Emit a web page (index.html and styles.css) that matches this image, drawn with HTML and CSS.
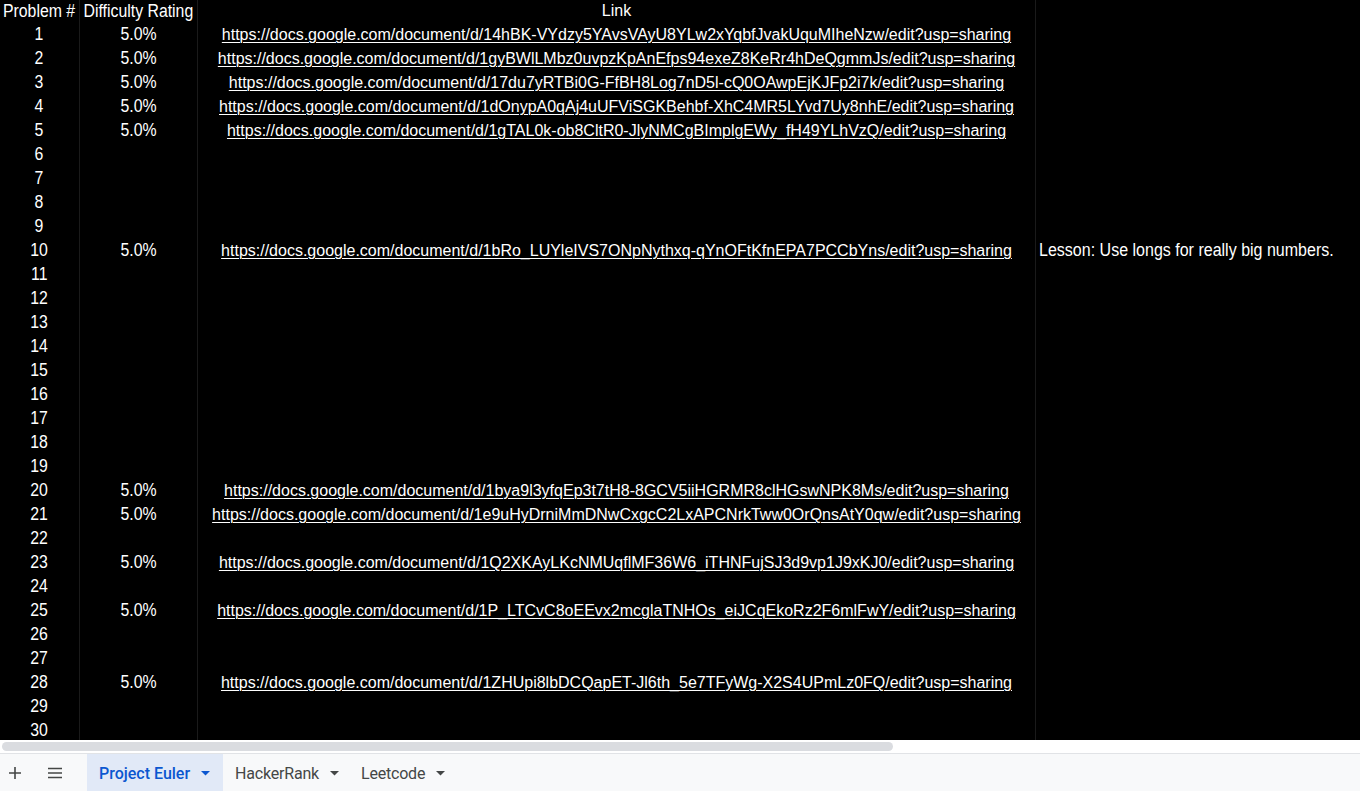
FILE: index.html
```html
<!DOCTYPE html>
<html>
<head>
<meta charset="utf-8">
<link rel="stylesheet" href="styles.css">
</head>
<body>
<div class="sheet">
  <div class="grid">
    <div class="c a hd"><span>Problem #</span></div><div class="c b hd"><span>Difficulty Rating</span></div><div class="c l hd">Link</div><div class="c d"></div>
    <div class="c a"><span>1</span></div><div class="c b"><span>5.0%</span></div><div class="c l"><u>https://docs.google.com/document/d/14hBK-VYdzy5YAvsVAyU8YLw2xYqbfJvakUquMIheNzw/edit?usp=sharing</u></div><div class="c d"></div>
    <div class="c a"><span>2</span></div><div class="c b"><span>5.0%</span></div><div class="c l"><u>https://docs.google.com/document/d/1gyBWlLMbz0uvpzKpAnEfps94exeZ8KeRr4hDeQgmmJs/edit?usp=sharing</u></div><div class="c d"></div>
    <div class="c a"><span>3</span></div><div class="c b"><span>5.0%</span></div><div class="c l"><u>https://docs.google.com/document/d/17du7yRTBi0G-FfBH8Log7nD5l-cQ0OAwpEjKJFp2i7k/edit?usp=sharing</u></div><div class="c d"></div>
    <div class="c a"><span>4</span></div><div class="c b"><span>5.0%</span></div><div class="c l"><u>https://docs.google.com/document/d/1dOnypA0qAj4uUFViSGKBehbf-XhC4MR5LYvd7Uy8nhE/edit?usp=sharing</u></div><div class="c d"></div>
    <div class="c a"><span>5</span></div><div class="c b"><span>5.0%</span></div><div class="c l"><u>https://docs.google.com/document/d/1gTAL0k-ob8CltR0-JlyNMCgBImplgEWy_fH49YLhVzQ/edit?usp=sharing</u></div><div class="c d"></div>
    <div class="c a"><span>6</span></div><div class="c b"></div><div class="c l"></div><div class="c d"></div>
    <div class="c a"><span>7</span></div><div class="c b"></div><div class="c l"></div><div class="c d"></div>
    <div class="c a"><span>8</span></div><div class="c b"></div><div class="c l"></div><div class="c d"></div>
    <div class="c a"><span>9</span></div><div class="c b"></div><div class="c l"></div><div class="c d"></div>
    <div class="c a"><span>10</span></div><div class="c b"><span>5.0%</span></div><div class="c l"><u>https://docs.google.com/document/d/1bRo_LUYleIVS7ONpNythxq-qYnOFtKfnEPA7PCCbYns/edit?usp=sharing</u></div><div class="c d"><span class="note">Lesson: Use longs for really big numbers.</span></div>
    <div class="c a"><span>11</span></div><div class="c b"></div><div class="c l"></div><div class="c d"></div>
    <div class="c a"><span>12</span></div><div class="c b"></div><div class="c l"></div><div class="c d"></div>
    <div class="c a"><span>13</span></div><div class="c b"></div><div class="c l"></div><div class="c d"></div>
    <div class="c a"><span>14</span></div><div class="c b"></div><div class="c l"></div><div class="c d"></div>
    <div class="c a"><span>15</span></div><div class="c b"></div><div class="c l"></div><div class="c d"></div>
    <div class="c a"><span>16</span></div><div class="c b"></div><div class="c l"></div><div class="c d"></div>
    <div class="c a"><span>17</span></div><div class="c b"></div><div class="c l"></div><div class="c d"></div>
    <div class="c a"><span>18</span></div><div class="c b"></div><div class="c l"></div><div class="c d"></div>
    <div class="c a"><span>19</span></div><div class="c b"></div><div class="c l"></div><div class="c d"></div>
    <div class="c a"><span>20</span></div><div class="c b"><span>5.0%</span></div><div class="c l"><u>https://docs.google.com/document/d/1bya9l3yfqEp3t7tH8-8GCV5iiHGRMR8clHGswNPK8Ms/edit?usp=sharing</u></div><div class="c d"></div>
    <div class="c a"><span>21</span></div><div class="c b"><span>5.0%</span></div><div class="c l"><u>https://docs.google.com/document/d/1e9uHyDrniMmDNwCxgcC2LxAPCNrkTww0OrQnsAtY0qw/edit?usp=sharing</u></div><div class="c d"></div>
    <div class="c a"><span>22</span></div><div class="c b"></div><div class="c l"></div><div class="c d"></div>
    <div class="c a"><span>23</span></div><div class="c b"><span>5.0%</span></div><div class="c l"><u>https://docs.google.com/document/d/1Q2XKAyLKcNMUqflMF36W6_iTHNFujSJ3d9vp1J9xKJ0/edit?usp=sharing</u></div><div class="c d"></div>
    <div class="c a"><span>24</span></div><div class="c b"></div><div class="c l"></div><div class="c d"></div>
    <div class="c a"><span>25</span></div><div class="c b"><span>5.0%</span></div><div class="c l"><u>https://docs.google.com/document/d/1P_LTCvC8oEEvx2mcglaTNHOs_eiJCqEkoRz2F6mlFwY/edit?usp=sharing</u></div><div class="c d"></div>
    <div class="c a"><span>26</span></div><div class="c b"></div><div class="c l"></div><div class="c d"></div>
    <div class="c a"><span>27</span></div><div class="c b"></div><div class="c l"></div><div class="c d"></div>
    <div class="c a"><span>28</span></div><div class="c b"><span>5.0%</span></div><div class="c l"><u>https://docs.google.com/document/d/1ZHUpi8lbDCQapET-Jl6th_5e7TFyWg-X2S4UPmLz0FQ/edit?usp=sharing</u></div><div class="c d"></div>
    <div class="c a"><span>29</span></div><div class="c b"></div><div class="c l"></div><div class="c d"></div>
    <div class="c a"><span>30</span></div><div class="c b"></div><div class="c l"></div><div class="c d"></div>
  </div>
</div>
<div class="hscroll"><div class="thumb"></div></div>
<div class="tabs">
  <div class="tb-btn plus"><svg width="14" height="14" viewBox="0 0 14 14"><path d="M7 1v12M1 7h12" stroke="#444746" stroke-width="1.6"/></svg></div>
  <div class="tb-btn menu"><svg width="16" height="12" viewBox="0 0 16 12"><path d="M1 1.5h14M1 6h14M1 10.5h14" stroke="#444746" stroke-width="1.6"/></svg></div>
  <div class="tab active">Project Euler<svg class="arr" width="9" height="5" viewBox="0 0 9 5"><path d="M0 0h9L4.5 4.5z" fill="#0b57d0"/></svg></div>
  <div class="tab">HackerRank<svg class="arr" width="9" height="5" viewBox="0 0 9 5"><path d="M0 0h9L4.5 4.5z" fill="#444746"/></svg></div>
  <div class="tab">Leetcode<svg class="arr" width="9" height="5" viewBox="0 0 9 5"><path d="M0 0h9L4.5 4.5z" fill="#444746"/></svg></div>
</div>
</body>
</html>
```
FILE: styles.css
```css
html, body {
  margin: 0;
  padding: 0;
  background: #000;
}
body {
  width: 1360px;
  height: 791px;
  overflow: hidden;
  display: flex;
  flex-direction: column;
}
.sheet {
  height: 740px;
  overflow: hidden;
  background: #000;
  flex: none;
}
.grid {
  display: grid;
  grid-template-columns: 80px 118px 838px 324px;
  grid-template-rows: 22px;
  grid-auto-rows: 24px;
  color: #fff;
}
.c {
  display: flex;
  align-items: center;
  white-space: nowrap;
  overflow: visible;
  border-right: 1px solid #1a1a1a;
  box-sizing: border-box;
  font-family: "Liberation Sans", Arial, sans-serif;
  font-size: 18px;
}
.c span {
  display: inline-block;
  transform: scaleX(0.88);
}
.a, .b, .l {
  justify-content: center;
}
.l {
  font-size: 16px;
  padding-top: 2px;
}
.l u {
  text-decoration-thickness: 1px;
  text-underline-offset: 2px;
}
.hd {
  font-size: 18px;
}
.l.hd {
  font-size: 16px;
  padding-top: 0;
}
.d {
  border-right: none;
  padding-left: 3px;
}
.c span.note {
  transform-origin: left center;
  transform: scaleX(0.89);
}
.hscroll {
  height: 13px;
  background: #fff;
  flex: none;
  padding: 2px 0 0 2px;
  box-sizing: border-box;
}
.thumb {
  width: 891px;
  height: 9px;
  border-radius: 5px;
  background: #dadce0;
}
.tabs {
  flex: 1;
  background: #f8f9fa;
  border-top: 1px solid #e1e3e6;
  display: flex;
  align-items: stretch;
  font-family: Roboto, "Liberation Sans", sans-serif;
  font-size: 16px;
  font-weight: 400;
  color: #444746;
}
.tb-btn {
  display: flex;
  align-items: center;
  justify-content: center;
}
.plus {
  width: 30px;
}
.menu {
  width: 50px;
  margin-right: 7px;
}
.tab {
  display: flex;
  align-items: center;
  padding: 1px 10px 0 12px;
  letter-spacing: -0.2px;
}
.tab .arr {
  margin-left: 11px;
}
.tab.active {
  background: #e1e9f7;
  color: #0b57d0;
  font-weight: 500;
  padding-right: 13px;
  letter-spacing: 0;
}
```
